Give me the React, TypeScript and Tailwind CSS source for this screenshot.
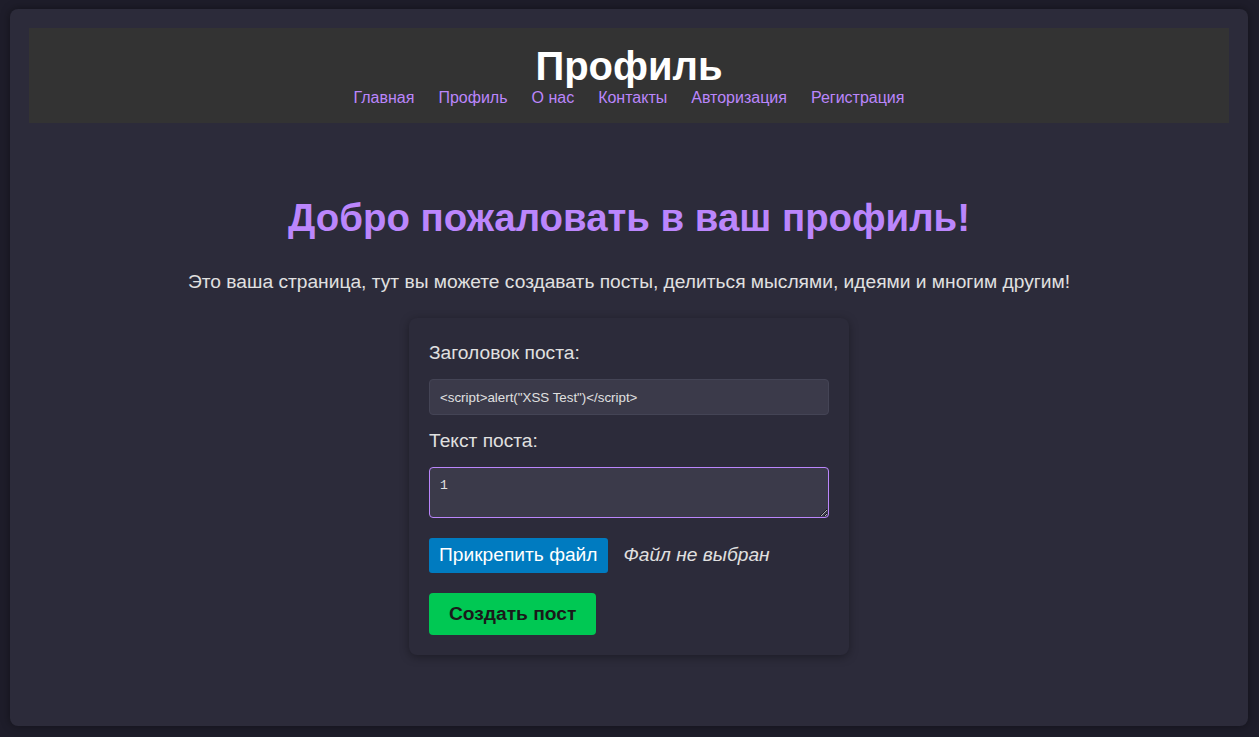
import React from "react";

const links = ["Главная", "Профиль", "О нас", "Контакты", "Авторизация", "Регистрация"];

const App: React.FC = () => {
  return (
    <div
      className="min-h-[737px] bg-[#1e1d2a] p-[9px_11px_11px_10px]"
      style={{ fontFamily: '"Liberation Sans", Arial, sans-serif' }}
    >
      <div className="min-h-[717px] rounded-lg bg-[#2c2b3a] p-[19px] shadow-[0_0_10px_rgba(0,0,0,0.4)]">
        <header className="flex h-[95px] flex-col items-center bg-[#333333] pt-[17px]">
          <h1 className="text-[40px] font-bold leading-[42px] text-white">Профиль</h1>
          <nav className="mt-[1px] flex gap-[24px] text-[16px] leading-[20px]">
            {links.map((l) => (
              <a key={l} href="#" className="text-[#bb86fc]">
                {l}
              </a>
            ))}
          </nav>
        </header>

        <main className="flex flex-col items-center">
          <h2 className="mt-[73px] text-[38.4px] font-bold leading-[44px] text-[#bb86fc]">
            Добро пожаловать в ваш профиль!
          </h2>
          <p className="mt-[31px] text-[19.2px] leading-[22px] text-[#e0e0e0]">
            Это ваша страница, тут вы можете создавать посты, делиться мыслями, идеями и многим другим!
          </p>

          <form className="mt-[25px] w-[440px] rounded-lg bg-[#2c2b3a] px-5 pt-[24px] pb-5 shadow-[0_2px_10px_rgba(0,0,0,0.35)]">
            <label className="block text-[19.2px] leading-[22px] text-[#e0e0e0]">Заголовок поста:</label>
            <input
              type="text"
              defaultValue={'<script>alert("XSS Test")</script>'}
              className="mt-[15px] h-[36px] w-full rounded-[4px] border border-[#444455] bg-[#3b3a4a] px-[10px] text-[13.33px] text-[#e0e0e0] outline-none"
            />
            <label className="mt-[15px] block text-[19.2px] leading-[22px] text-[#e0e0e0]">Текст поста:</label>
            <textarea
              defaultValue="1"
              className="mt-[15px] block h-[51px] w-full rounded-[4px] border border-[#bb86fc] bg-[#3b3a4a] px-[10px] py-[8px] text-[#e0e0e0] outline-none"
              style={{ fontFamily: '"Liberation Mono", monospace', fontSize: 13 }}
            />
            <div className="mt-[20px] flex items-center gap-[16px]">
              <span className="flex h-[35px] items-center rounded-[3px] bg-[#007bc0] px-[10px] text-[19.2px] text-white">
                Прикрепить файл
              </span>
              <span className="text-[19.2px] italic text-[#e0e0e0]">Файл не выбран</span>
            </div>
            <button
              type="button"
              className="mt-[20px] flex h-[42px] items-center rounded-[4px] bg-[#00c853] px-[20px] text-[19.2px] font-bold text-[#1a1a1a]"
            >
              Создать пост
            </button>
          </form>
        </main>
      </div>
    </div>
  );
};

export default App;
